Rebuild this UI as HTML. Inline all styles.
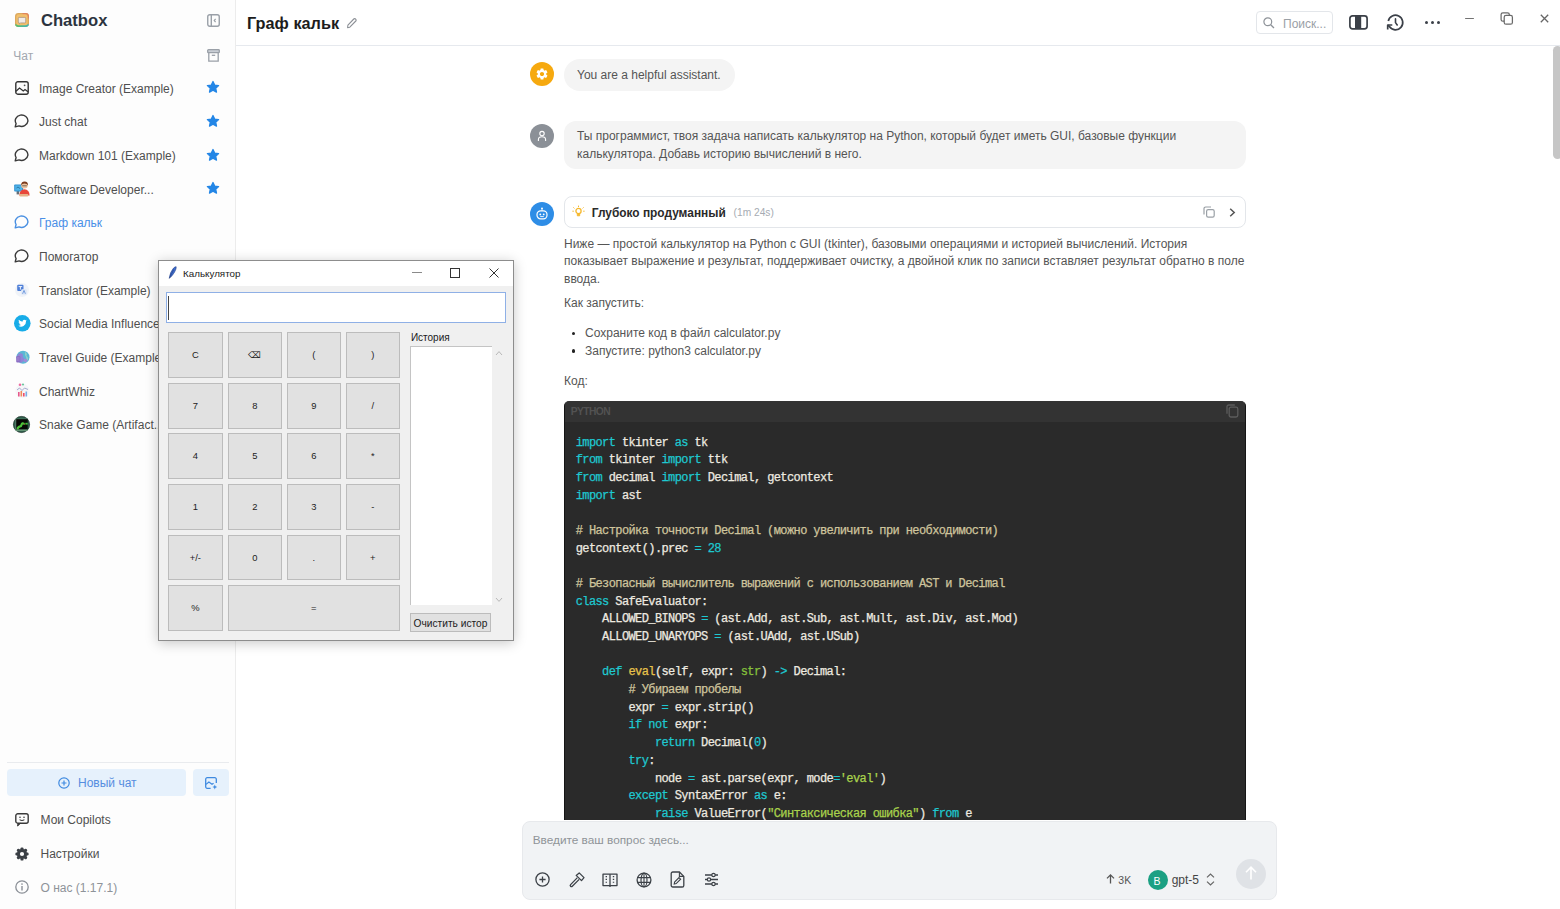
<!DOCTYPE html>
<html><head><meta charset="utf-8">
<style>
*{margin:0;padding:0;box-sizing:border-box}
html,body{width:1560px;height:909px;overflow:hidden;background:#fff;font-family:"Liberation Sans",sans-serif;color:#333}
.a{position:absolute;white-space:nowrap}
.ico{position:absolute;overflow:visible}
#sb{position:absolute;left:0;top:0;width:236px;height:909px;background:#fdfdfd;border-right:1px solid #ececec}
.code{font-family:"Liberation Mono",monospace;font-size:12px;letter-spacing:-0.6px;color:#eeeae0;white-space:pre;-webkit-text-stroke:0.25px currentColor}
.k{color:#1ec8d0}.c{color:#cfc59d}.f{color:#e8c34a}.s{color:#a9d34c}.b{color:#86c13c}
.btn{position:absolute;background:#e1e1e1;border:1px solid #bcbcbc;font-size:9.4px;color:#222;display:flex;align-items:center;justify-content:center;padding-bottom:1px;font-family:"Liberation Sans",sans-serif;white-space:nowrap}

</style></head><body>
<div id="sb"></div>
<svg class="ico" style="left:15px;top:13px" width="14" height="14" viewBox="0 0 14 14"><defs><clipPath id="lg"><rect x="0" y="0" width="14" height="14" rx="3.4"/></clipPath><linearGradient id="lgb" x1="0" x2="1"><stop offset="0" stop-color="#5cbf6a"/><stop offset="1" stop-color="#3fb3c0"/></linearGradient></defs><g clip-path="url(#lg)"><rect x="0" y="0" width="14" height="14" fill="#dba85e"/><rect x="7.5" y="0" width="6.5" height="5.5" fill="#e0845e"/><rect x="0" y="11.3" width="14" height="2.7" fill="url(#lgb)"/></g><rect x="1.3" y="1.3" width="11.4" height="11" rx="2.4" fill="#f2c06c"/><path d="M4.2 4.4 H9.8 A0.9 0.9 0 0 1 10.7 5.3 V9 A0.9 0.9 0 0 1 9.8 9.9 H5.6 L4.4 10.9 V9.9 A0.9 0.9 0 0 1 3.3 9 V5.3 A0.9 0.9 0 0 1 4.2 4.4Z" fill="#f1ebe6" stroke="#a08c7c" stroke-width="0.7"/></svg><div class="a" style="left:41px;top:11.45px;font-size:16.6px;line-height:20px;color:#2c3440;font-weight:bold;">Chatbox</div>
<svg class="ico" style="left:207px;top:14px" width="13" height="13" viewBox="0 0 13 13"><rect x="0.75" y="0.75" width="11.5" height="11.5" rx="2" fill="none" stroke="#9aa0a8" stroke-width="1.4"/><line x1="4.3" y1="1" x2="4.3" y2="12" stroke="#9aa0a8" stroke-width="1.4"/><path d="M8.6 4.8 L7.2 6.5 L8.6 8.2" fill="none" stroke="#9aa0a8" stroke-width="1.2"/></svg><div class="a" style="left:13.3px;top:48.74px;font-size:12px;line-height:14px;color:#a3a8b0;font-weight:normal;">Чат</div>
<svg class="ico" style="left:207px;top:49px" width="13" height="13" viewBox="0 0 13 13"><rect x="0.7" y="0.7" width="11.6" height="3" rx="0.8" fill="#c9ced5" stroke="#9aa0a8" stroke-width="1.3"/><path d="M1.8 3.8 V12.2 H11.2 V3.8" fill="none" stroke="#9aa0a8" stroke-width="1.3"/><line x1="4.8" y1="6.3" x2="8.2" y2="6.3" stroke="#9aa0a8" stroke-width="1.3"/></svg><div class="a" style="left:39px;top:81.74px;font-size:12px;line-height:14px;color:#4f4f4f;font-weight:normal;">Image Creator (Example)</div>
<svg class="ico" style="left:15px;top:80.60px" width="14" height="14" viewBox="0 0 14 14"><rect x="0.8" y="0.8" width="12.4" height="12.4" rx="2" fill="none" stroke="#333" stroke-width="1.4"/><path d="M1 10.2 L4.5 7 L8.3 10 L10 8.6 L13 10.8" fill="none" stroke="#333" stroke-width="1.3"/><circle cx="9.6" cy="4.3" r="0.9" fill="#555"/></svg><svg class="ico" style="left:206px;top:80.20px" width="14" height="14" viewBox="0 0 24 24"><path d="M12 2.6l2.9 6.1 6.7.8-5 4.6 1.4 6.6L12 17.3l-6 3.4 1.4-6.6-5-4.6 6.7-.8z" fill="#2386e6" stroke="#2386e6" stroke-width="2.2" stroke-linejoin="round"/></svg><div class="a" style="left:39px;top:115.41px;font-size:12px;line-height:14px;color:#4f4f4f;font-weight:normal;">Just chat</div>
<div class="ico" style="left:14.3px;top:114.07px"><svg width="15" height="14" viewBox="0 0 15 14"><path d="M1.2 12.9 L2.1 9.5 A6.3 5.7 0 1 1 5.0 11.9 Z" fill="none" stroke="#3a3a3a" stroke-width="1.4" stroke-linejoin="round"/></svg></div><svg class="ico" style="left:206px;top:113.87px" width="14" height="14" viewBox="0 0 24 24"><path d="M12 2.6l2.9 6.1 6.7.8-5 4.6 1.4 6.6L12 17.3l-6 3.4 1.4-6.6-5-4.6 6.7-.8z" fill="#2386e6" stroke="#2386e6" stroke-width="2.2" stroke-linejoin="round"/></svg><div class="a" style="left:39px;top:149.08px;font-size:12px;line-height:14px;color:#4f4f4f;font-weight:normal;">Markdown 101 (Example)</div>
<div class="ico" style="left:14.3px;top:147.74px"><svg width="15" height="14" viewBox="0 0 15 14"><path d="M1.2 12.9 L2.1 9.5 A6.3 5.7 0 1 1 5.0 11.9 Z" fill="none" stroke="#3a3a3a" stroke-width="1.4" stroke-linejoin="round"/></svg></div><svg class="ico" style="left:206px;top:147.54px" width="14" height="14" viewBox="0 0 24 24"><path d="M12 2.6l2.9 6.1 6.7.8-5 4.6 1.4 6.6L12 17.3l-6 3.4 1.4-6.6-5-4.6 6.7-.8z" fill="#2386e6" stroke="#2386e6" stroke-width="2.2" stroke-linejoin="round"/></svg><div class="a" style="left:39px;top:182.75px;font-size:12px;line-height:14px;color:#4f4f4f;font-weight:normal;">Software Developer...</div>
<svg class="ico" style="left:14px;top:180.61px" width="16" height="16" viewBox="0 0 16 16"><rect x="2.6" y="10" width="2.6" height="3.4" fill="#6a6f75"/><rect x="0.2" y="3.4" width="9" height="7.2" rx="0.8" fill="#2f8fd0"/><rect x="1.2" y="4.4" width="7" height="5.2" fill="#4fb3e8"/><path d="M2.5 7 L4 6 L6 7.5" fill="none" stroke="#1d5f8a" stroke-width="0.7"/><circle cx="10.5" cy="4.2" r="3.3" fill="#eec29c"/><path d="M7.2 4.6 Q7 0.4 10.6 0.4 Q14.2 0.4 13.9 4.6 Q13.2 2.4 10.5 2.4 Q7.9 2.4 7.2 4.6Z" fill="#7a3b1d"/><path d="M8.2 4.8 H12.8" stroke="#444" stroke-width="0.7"/><path d="M5.4 14.6 Q5.6 8.4 10.5 8.3 Q15.4 8.4 15.6 14.6Z" fill="#e8473a"/><rect x="5.4" y="13" width="9" height="2.4" rx="1" fill="#e6b287"/></svg><svg class="ico" style="left:206px;top:181.21px" width="14" height="14" viewBox="0 0 24 24"><path d="M12 2.6l2.9 6.1 6.7.8-5 4.6 1.4 6.6L12 17.3l-6 3.4 1.4-6.6-5-4.6 6.7-.8z" fill="#2386e6" stroke="#2386e6" stroke-width="2.2" stroke-linejoin="round"/></svg><div class="a" style="left:39px;top:216.42px;font-size:12px;line-height:14px;color:#4a8fe7;font-weight:normal;">Граф кальк</div>
<div class="ico" style="left:14.3px;top:215.08px"><svg width="15" height="14" viewBox="0 0 15 14"><path d="M1.2 12.9 L2.1 9.5 A6.3 5.7 0 1 1 5.0 11.9 Z" fill="none" stroke="#4a90e2" stroke-width="1.4" stroke-linejoin="round"/></svg></div><div class="a" style="left:39px;top:250.09px;font-size:12px;line-height:14px;color:#4f4f4f;font-weight:normal;">Помогатор</div>
<div class="ico" style="left:14.3px;top:248.75px"><svg width="15" height="14" viewBox="0 0 15 14"><path d="M1.2 12.9 L2.1 9.5 A6.3 5.7 0 1 1 5.0 11.9 Z" fill="none" stroke="#3a3a3a" stroke-width="1.4" stroke-linejoin="round"/></svg></div><div class="a" style="left:39px;top:283.76px;font-size:12px;line-height:14px;color:#4f4f4f;font-weight:normal;">Translator (Example)</div>
<svg class="ico" style="left:15px;top:282.62px" width="14" height="14" viewBox="0 0 14 14"><circle cx="7" cy="7" r="7" fill="#f0f3f8"/><rect x="2.2" y="1.8" width="6.3" height="6.3" rx="1" fill="#4e7fd8"/><path d="M3.6 3.6 H7.2 M5.4 3.6 V6.6" stroke="#fff" stroke-width="0.9"/><rect x="6.2" y="6.2" width="5.6" height="5.6" rx="1" fill="#dfe8f7"/><path d="M7.6 10.8 L9 7.4 L10.4 10.8" fill="none" stroke="#5b8ad8" stroke-width="0.8"/></svg><div class="a" style="left:39px;top:317.43px;font-size:12px;line-height:14px;color:#4f4f4f;font-weight:normal;">Social Media Influencer (Example)</div>
<svg class="ico" style="left:13.5px;top:315.19px" width="16.6" height="16.6" viewBox="0 0 15 15"><circle cx="7.5" cy="7.5" r="7.5" fill="#17ace8"/><path d="M11.6 4.9c-.3.1-.6.2-.9.3.3-.2.6-.5.7-.9-.3.2-.7.3-1 .4a1.6 1.6 0 0 0-2.7 1.4A4.5 4.5 0 0 1 4.4 4.4a1.6 1.6 0 0 0 .5 2.1c-.3 0-.5-.1-.7-.2 0 .8.6 1.4 1.3 1.6-.2.1-.5.1-.7 0 .2.6.8 1.1 1.5 1.1a3.2 3.2 0 0 1-2.4.7 4.5 4.5 0 0 0 7-4v-.2c.3-.2.5-.5.7-.8z" fill="#fff"/></svg><div class="a" style="left:39px;top:351.10px;font-size:12px;line-height:14px;color:#4f4f4f;font-weight:normal;">Travel Guide (Example)</div>
<svg class="ico" style="left:14.5px;top:349.96px" width="15" height="15" viewBox="0 0 15 15"><circle cx="8" cy="7.2" r="6.5" fill="#5ab8d6"/><path d="M3 4 Q6 2.5 8 4.5 Q7 7 9.5 8.5 Q9 11.5 6.5 13 Q2.5 11 1.8 7.5Z" fill="#8f86d6"/><path d="M10 1.5 Q12.5 3.5 11.5 5.5 Q13.5 7 12.8 10.5 Q11 9 11 7 Q9.5 5 10 1.5Z" fill="#8fd0c8"/><circle cx="10.5" cy="10.5" r="1.8" fill="#a08ad8"/><rect x="1.2" y="6" width="4.2" height="6.4" rx="1" fill="#8c6fc4"/><path d="M2 8 H4.6 M2 10 H4.6" stroke="#b79be0" stroke-width="0.6"/></svg><div class="a" style="left:39px;top:384.77px;font-size:12px;line-height:14px;color:#4f4f4f;font-weight:normal;">ChartWhiz</div>
<svg class="ico" style="left:14.5px;top:382.63px" width="15" height="16" viewBox="0 0 15 16"><circle cx="7.5" cy="8" r="7.2" fill="#f6f6f8"/><path d="M2 7 L4.5 5 L7 7.5 L9.5 5 L13 6.5" fill="none" stroke="#9aa0c8" stroke-width="0.9"/><rect x="3" y="9" width="1.6" height="4.5" fill="#e8588a"/><rect x="5.5" y="8" width="1.6" height="5.5" fill="#f08b5a"/><rect x="8" y="10" width="1.6" height="3.5" fill="#ef4d6d"/><rect x="10.5" y="8.5" width="1.6" height="5" fill="#7aaee6"/><circle cx="5" cy="1.8" r="1.3" fill="#f06aa0"/><circle cx="8" cy="1.5" r="1.1" fill="#6cc6a0"/></svg><div class="a" style="left:39px;top:418.44px;font-size:12px;line-height:14px;color:#4f4f4f;font-weight:normal;">Snake Game (Artifact...</div>
<svg class="ico" style="left:13.3px;top:416.30px" width="17" height="17" viewBox="0 0 17 17"><circle cx="8.5" cy="8.5" r="8.3" fill="#2f5e4c"/><circle cx="8.5" cy="8.5" r="8.1" fill="none" stroke="#22302a" stroke-width="0.6"/><rect x="3" y="3" width="11.7" height="10.6" fill="#060906"/><rect x="3" y="2.4" width="11.7" height="0.8" fill="#4a7a62"/><rect x="2.6" y="13.5" width="12" height="1.4" fill="#6a9a7a"/><rect x="2.4" y="3" width="0.8" height="10.6" fill="#6a8a7a"/><path d="M4.6 12.4 Q5.6 10.6 7 10.4 Q8.4 10 8.7 8.2 Q9.4 6.8 10.8 7.6" stroke="#4cc23a" stroke-width="2.2" fill="none" stroke-linecap="round"/><rect x="12.3" y="6.8" width="2.4" height="1.8" fill="#3fc23a"/><circle cx="11.3" cy="8.2" r="0.7" fill="#8a5a2a"/></svg><div class="a" style="left:7px;top:761.5px;width:222px;height:1px;background:#e9ebee"></div><div class="a" style="left:7px;top:769px;width:179px;height:27px;background:#e6f1fc;border-radius:4px"></div><svg class="ico" style="left:58px;top:776.5px" width="12" height="12" viewBox="0 0 12 12"><circle cx="6" cy="6" r="5.2" fill="none" stroke="#3f8ae0" stroke-width="1.2"/><path d="M6 3.5v5M3.5 6h5" stroke="#3f8ae0" stroke-width="1.2"/></svg><div class="a" style="left:78px;top:776.14px;font-size:12px;line-height:14px;color:#558de0;font-weight:normal;">Новый чат</div>
<div class="a" style="left:193px;top:769px;width:36px;height:27px;background:#e6f1fc;border-radius:4px"></div><svg class="ico" style="left:205px;top:776.5px" width="12.5" height="12.5" viewBox="0 0 12.5 12.5"><path d="M5.6 11.3 H2.2 A1.5 1.5 0 0 1 0.7 9.8 V2.2 A1.5 1.5 0 0 1 2.2 0.7 H9.8 A1.5 1.5 0 0 1 11.3 2.2 V6" fill="none" stroke="#3f8ae0" stroke-width="1.3"/><path d="M1 7.4 L3.9 5 L7 7.3 L8.6 6.2" fill="none" stroke="#3f8ae0" stroke-width="1.2"/><path d="M9.8 7.6 L10.5 9.3 L12.2 10 L10.5 10.7 L9.8 12.4 L9.1 10.7 L7.4 10 L9.1 9.3Z" fill="#3f8ae0"/></svg><svg class="ico" style="left:15px;top:813px" width="14" height="14" viewBox="0 0 14 14"><rect x="0.8" y="0.8" width="12.4" height="9.4" rx="2" fill="none" stroke="#3a3a3a" stroke-width="1.4"/><path d="M3 10.2 L2.6 13 L5.6 10.2" fill="#3a3a3a" stroke="#3a3a3a" stroke-width="1"/><circle cx="5" cy="4.2" r="0.8" fill="#3a3a3a"/><circle cx="9" cy="4.2" r="0.8" fill="#3a3a3a"/><path d="M4.6 6.6 Q7 8.4 9.4 6.6" fill="none" stroke="#3a3a3a" stroke-width="1.1"/></svg><div class="a" style="left:40.5px;top:812.84px;font-size:12px;line-height:14px;color:#4f4f4f;font-weight:normal;">Мои Copilots</div>
<svg class="ico" style="left:15px;top:846.5px" width="14" height="14" viewBox="0 0 14 14"><g fill="#3a3f45"><circle cx="7" cy="7" r="5.1"/><rect x="5.5" y="0.4" width="3" height="13.2" rx="1.2"/><rect x="5.5" y="0.4" width="3" height="13.2" rx="1.2" transform="rotate(45 7 7)"/><rect x="5.5" y="0.4" width="3" height="13.2" rx="1.2" transform="rotate(90 7 7)"/><rect x="5.5" y="0.4" width="3" height="13.2" rx="1.2" transform="rotate(135 7 7)"/></g><circle cx="7" cy="7" r="2.1" fill="#fdfdfd"/></svg><div class="a" style="left:40.5px;top:846.64px;font-size:12px;line-height:14px;color:#4f4f4f;font-weight:normal;">Настройки</div>
<svg class="ico" style="left:15px;top:880px" width="14" height="14" viewBox="0 0 14 14"><circle cx="7" cy="7" r="6.2" fill="none" stroke="#8a8f96" stroke-width="1.3"/><rect x="6.3" y="6" width="1.4" height="4.5" fill="#8a8f96"/><circle cx="7" cy="4" r="0.85" fill="#8a8f96"/></svg><div class="a" style="left:40.5px;top:880.64px;font-size:12px;line-height:14px;color:#8e9399;font-weight:normal;">О нас (1.17.1)</div>

<div class="a" style="left:236px;top:44.5px;width:1324px;height:1px;background:#e6e9ee"></div><div class="a" style="left:247px;top:12.75px;font-size:16.3px;line-height:20px;color:#1c1c1c;font-weight:bold;">Граф кальк</div>
<svg class="ico" style="left:346px;top:17px" width="11" height="12" viewBox="0 0 11 12"><path d="M1.6 10.6 L1.9 8.2 L7.8 2.0 A1.2 1.2 0 0 1 9.5 2.0 L9.8 2.3 A1.2 1.2 0 0 1 9.8 4.0 L3.8 10.2 Z" fill="none" stroke="#8c9096" stroke-width="1.1" stroke-linejoin="round"/></svg><div class="a" style="left:1256px;top:11px;width:77px;height:23px;border:1px solid #e3e6ea;border-radius:4px;background:#fff"></div><svg class="ico" style="left:1263px;top:17px" width="12" height="12" viewBox="0 0 12 12"><circle cx="4.8" cy="4.8" r="3.9" fill="none" stroke="#8e9399" stroke-width="1.2"/><path d="M7.7 7.7 L11 11" stroke="#8e9399" stroke-width="1.3"/></svg><div class="a" style="left:1283px;top:17.14px;font-size:12px;line-height:14px;color:#9aa0a6;font-weight:normal;">Поиск...</div>
<svg class="ico" style="left:1349px;top:15px" width="19" height="15" viewBox="0 0 19 15"><rect x="0.9" y="0.9" width="17.2" height="13" rx="2.6" fill="none" stroke="#3b4048" stroke-width="1.7"/><rect x="6" y="0.9" width="6.2" height="13" fill="#3b4048"/></svg><svg class="ico" style="left:1386px;top:14px" width="19" height="18" viewBox="0 0 19 18"><path d="M2.3 7.0 A7.3 7.3 0 1 1 3.4 12.6 L1.9 11.2" fill="none" stroke="#3b4048" stroke-width="1.7"/><path d="M1.7 15.4 V11.0 H6.3" fill="none" stroke="#3b4048" stroke-width="1.7" stroke-linejoin="round"/><path d="M9.5 4.9 V8.6 L11.2 11" fill="none" stroke="#3b4048" stroke-width="1.6" stroke-linecap="round"/></svg><div class="a" style="left:1424.9px;top:21px;width:3.2px;height:3.2px;border-radius:50%;background:#3b4048"></div><div class="a" style="left:1430.9px;top:21px;width:3.2px;height:3.2px;border-radius:50%;background:#3b4048"></div><div class="a" style="left:1436.9px;top:21px;width:3.2px;height:3.2px;border-radius:50%;background:#3b4048"></div><div class="a" style="left:1465px;top:17.8px;width:9.2px;height:1.5px;border-radius:1px;background:#737373"></div><svg class="ico" style="left:1500px;top:12px" width="14" height="13" viewBox="0 0 14 13"><rect x="1.1" y="0.8" width="8.2" height="8.4" rx="1.8" fill="none" stroke="#6a6a6a" stroke-width="1.25"/><rect x="4.2" y="3.4" width="8.2" height="8.8" rx="1.8" fill="#fff" stroke="#6a6a6a" stroke-width="1.25"/></svg><svg class="ico" style="left:1539.5px;top:14px" width="9" height="9" viewBox="0 0 9 9"><path d="M0.8 0.8 L8.2 8.2 M8.2 0.8 L0.8 8.2" stroke="#666" stroke-width="1.3"/></svg><div class="a" style="left:1552.5px;top:46px;width:9px;height:113px;border-radius:4.5px;background:#c6c6c6"></div>
<div class="a" style="left:530px;top:62px;width:24px;height:24px;border-radius:50%;background:#f6a90f"></div><svg class="ico" style="left:535px;top:67px" width="14" height="14" viewBox="0 0 24 24"><path fill="#fff" d="M19.14 12.94c.04-.3.06-.61.06-.94 0-.32-.02-.64-.07-.94l2.03-1.58a.49.49 0 0 0 .12-.61l-1.92-3.32a.49.49 0 0 0-.59-.22l-2.39.96c-.5-.38-1.03-.7-1.62-.94l-.36-2.54a.484.484 0 0 0-.48-.41h-3.84c-.24 0-.43.17-.47.41l-.36 2.54c-.59.24-1.130.57-1.62.94l-2.39-.96a.49.49 0 0 0-.59.22L2.74 8.87c-.12.21-.08.47.12.61l2.03 1.58c-.05.3-.09.63-.09.94s.02.64.07.94l-2.03 1.58a.49.49 0 0 0-.12.61l1.92 3.32c.12.22.37.29.59.22l2.39-.96c.5.38 1.03.7 1.62.94l.36 2.54c.05.24.24.41.48.41h3.84c.24 0 .44-.17.47-.41l.36-2.54c.59-.24 1.13-.56 1.62-.94l2.39.96c.22.08.47 0 .59-.22l1.92-3.32c.12-.22.07-.47-.12-.61l-2.01-1.58zM12 15.6c-1.98 0-3.6-1.62-3.6-3.6s1.62-3.6 3.6-3.6 3.6 1.62 3.6 3.6-1.62 3.6-3.6 3.6z"/></svg><div class="a" style="left:564px;top:59px;width:171px;height:32px;border-radius:16px;background:#f4f4f4"></div><div class="a" style="left:577px;top:68.04px;font-size:12px;line-height:14px;color:#555;font-weight:normal;">You are a helpful assistant.</div>
<div class="a" style="left:530px;top:123.5px;width:24px;height:24px;border-radius:50%;background:#8b9097"></div><svg class="ico" style="left:536px;top:129.5px" width="12" height="12" viewBox="0 0 12 12"><circle cx="6" cy="3.6" r="2.2" fill="none" stroke="#fff" stroke-width="1.1"/><path d="M2.4 11 V9.6 A3.2 2.6 0 0 1 9.6 9.6 V11" fill="none" stroke="#fff" stroke-width="1.1"/></svg><div class="a" style="left:564px;top:121px;width:682px;height:48px;border-radius:12px;background:#f4f4f4"></div><div class="a" style="left:577px;top:129.44px;font-size:12px;line-height:14px;color:#555;font-weight:normal;">Ты программист, твоя задача написать калькулятор на Python, который будет иметь GUI, базовые функции</div>
<div class="a" style="left:577px;top:147.04px;font-size:12px;line-height:14px;color:#555;font-weight:normal;">калькулятора. Добавь историю вычислений в него.</div>
<div class="a" style="left:530px;top:202px;width:24px;height:24px;border-radius:50%;background:#2e8de6"></div><svg class="ico" style="left:535px;top:207px" width="14" height="14" viewBox="0 0 14 14"><circle cx="7" cy="1.6" r="1" fill="#fff"/><path d="M7 2.4 V3.6" stroke="#fff" stroke-width="1"/><rect x="2" y="3.8" width="10" height="8" rx="3.6" fill="none" stroke="#fff" stroke-width="1.2"/><circle cx="5.3" cy="7.4" r="0.9" fill="#fff"/><circle cx="8.7" cy="7.4" r="0.9" fill="#fff"/><path d="M5.2 9.6 H8.8" stroke="#fff" stroke-width="0.9"/></svg><div class="a" style="left:564px;top:196px;width:682px;height:31.5px;border-radius:8px;border:1px solid #e3e6ea;background:#fff"></div><svg class="ico" style="left:571.5px;top:205px" width="13" height="13" viewBox="0 0 13 13"><circle cx="6.5" cy="6" r="2.6" fill="none" stroke="#f5b82e" stroke-width="1.3"/><path d="M5.3 8.6 V10.8 H7.7 V8.6" fill="#f5b82e" stroke="#f5b82e" stroke-width="0.9"/><path d="M6.5 0.6 V2 M1.4 2.4 L2.4 3.4 M11.6 2.4 L10.6 3.4 M0.4 6.2 H1.8 M11.2 6.2 H12.6" stroke="#f5b82e" stroke-width="1"/></svg><div class="a" style="left:591.8px;top:206.48px;font-size:11.9px;line-height:14px;color:#2a2a2a;font-weight:bold;">Глубоко продуманный</div>
<div class="a" style="left:733.6px;top:206.97px;font-size:10.2px;line-height:12px;color:#a6abb2;font-weight:normal;">(1m 24s)</div>
<svg class="ico" style="left:1203px;top:205.5px" width="12" height="12" viewBox="0 0 12 12"><rect x="3.6" y="3.6" width="7.6" height="7.6" rx="1.6" fill="none" stroke="#9aa0a6" stroke-width="1.2"/><path d="M1 8.4 V2.6 A1.6 1.6 0 0 1 2.6 1 H8" fill="none" stroke="#9aa0a6" stroke-width="1.2"/></svg><svg class="ico" style="left:1228.5px;top:207.5px" width="7" height="9" viewBox="0 0 7 9"><path d="M1.2 0.8 L5.2 4.5 L1.2 8.2" fill="none" stroke="#555" stroke-width="1.5"/></svg><div class="a" style="left:564px;top:236.84px;font-size:12px;line-height:14px;color:#555;font-weight:normal;">Ниже — простой калькулятор на Python с GUI (tkinter), базовыми операциями и историей вычислений. История</div>
<div class="a" style="left:564px;top:254.44px;font-size:12px;line-height:14px;color:#555;font-weight:normal;">показывает выражение и результат, поддерживает очистку, а двойной клик по записи вставляет результат обратно в поле</div>
<div class="a" style="left:564px;top:271.94px;font-size:12px;line-height:14px;color:#555;font-weight:normal;">ввода.</div>
<div class="a" style="left:564px;top:296.44px;font-size:12px;line-height:14px;color:#555;font-weight:normal;">Как запустить:</div>
<div class="a" style="left:564px;top:373.64px;font-size:12px;line-height:14px;color:#555;font-weight:normal;">Код:</div>
<div class="a" style="left:572px;top:331.60px;width:3.4px;height:3.4px;border-radius:50%;background:#222"></div><div class="a" style="left:585px;top:326.04px;font-size:12px;line-height:14px;color:#555;font-weight:normal;">Сохраните код в файл calculator.py</div>
<div class="a" style="left:572px;top:349.30px;width:3.4px;height:3.4px;border-radius:50%;background:#222"></div><div class="a" style="left:585px;top:343.74px;font-size:12px;line-height:14px;color:#555;font-weight:normal;">Запустите: python3 calculator.py</div>

<div class="a" style="left:563.5px;top:400.5px;width:682.5px;height:419.5px;overflow:hidden"><div class="a" style="left:0;top:0;width:682.5px;height:600px;background:#2a2a2a;border:1px solid #151515;border-top-color:#333;border-radius:5px;overflow:hidden"><div class="a" style="left:0;top:0;width:100%;height:20px;background:#333"></div></div><div class="a" style="left:7.3px;top:5.83px;font-size:10.3px;line-height:12px;color:#525252;font-weight:bold;letter-spacing:-0.6px;">PYTHON</div>
<svg class="ico" style="left:662.5px;top:3.2px" width="13" height="14" viewBox="0 0 13 14"><rect x="3.2" y="3.2" width="8.6" height="9.8" rx="1.8" fill="none" stroke="#5c5c5c" stroke-width="1.3"/><path d="M1 9.8 V2.8 A1.8 1.8 0 0 1 2.8 1 H8.8" fill="none" stroke="#5c5c5c" stroke-width="1.3"/></svg><div class="a code" style="left:12.2px;top:35.10px;line-height:14px"><span class="k">import</span> tkinter <span class="k">as</span> tk</div><div class="a code" style="left:12.2px;top:52.78px;line-height:14px"><span class="k">from</span> tkinter <span class="k">import</span> ttk</div><div class="a code" style="left:12.2px;top:70.46px;line-height:14px"><span class="k">from</span> decimal <span class="k">import</span> Decimal, getcontext</div><div class="a code" style="left:12.2px;top:88.14px;line-height:14px"><span class="k">import</span> ast</div><div class="a code" style="left:12.2px;top:105.82px;line-height:14px"></div><div class="a code" style="left:12.2px;top:123.50px;line-height:14px"><span class="c"># Настройка точности Decimal (можно увеличить при необходимости)</span></div><div class="a code" style="left:12.2px;top:141.18px;line-height:14px">getcontext().prec <span class="k">=</span> <span class="k">28</span></div><div class="a code" style="left:12.2px;top:158.86px;line-height:14px"></div><div class="a code" style="left:12.2px;top:176.54px;line-height:14px"><span class="c"># Безопасный вычислитель выражений с использованием AST и Decimal</span></div><div class="a code" style="left:12.2px;top:194.22px;line-height:14px"><span class="k">class</span> SafeEvaluator:</div><div class="a code" style="left:12.2px;top:211.90px;line-height:14px">    ALLOWED_BINOPS <span class="k">=</span> (ast.Add, ast.Sub, ast.Mult, ast.Div, ast.Mod)</div><div class="a code" style="left:12.2px;top:229.58px;line-height:14px">    ALLOWED_UNARYOPS <span class="k">=</span> (ast.UAdd, ast.USub)</div><div class="a code" style="left:12.2px;top:247.26px;line-height:14px"></div><div class="a code" style="left:12.2px;top:264.94px;line-height:14px">    <span class="k">def</span> <span class="f">eval</span>(self, expr: <span class="b">str</span>) <span class="k">-&gt;</span> Decimal:</div><div class="a code" style="left:12.2px;top:282.62px;line-height:14px">        <span class="c"># Убираем пробелы</span></div><div class="a code" style="left:12.2px;top:300.30px;line-height:14px">        expr <span class="k">=</span> expr.strip()</div><div class="a code" style="left:12.2px;top:317.98px;line-height:14px">        <span class="k">if</span> <span class="k">not</span> expr:</div><div class="a code" style="left:12.2px;top:335.66px;line-height:14px">            <span class="k">return</span> Decimal(<span class="k">0</span>)</div><div class="a code" style="left:12.2px;top:353.34px;line-height:14px">        <span class="k">try</span>:</div><div class="a code" style="left:12.2px;top:371.02px;line-height:14px">            node <span class="k">=</span> ast.parse(expr, mode<span class="k">=</span><span class="s">&#x27;eval&#x27;</span>)</div><div class="a code" style="left:12.2px;top:388.70px;line-height:14px">        <span class="k">except</span> SyntaxError <span class="k">as</span> e:</div><div class="a code" style="left:12.2px;top:406.38px;line-height:14px">            <span class="k">raise</span> ValueError(<span class="s">&quot;Синтаксическая ошибка&quot;</span>) <span class="k">from</span> e</div><div class="a code" style="left:12.2px;top:424.06px;line-height:14px">            <span class="k">raise</span> ValueError(</div></div>
<div class="a" style="left:521.5px;top:820.5px;width:755.5px;height:79.5px;border-radius:8px;background:#f1f3f5;border:1px solid #e7e9ec"></div><div class="a" style="left:532.7px;top:833.21px;font-size:11.8px;line-height:14px;color:#8f9398;font-weight:normal;">Введите ваш вопрос здесь...</div>
<svg class="ico" style="left:535px;top:872px" width="15" height="15" viewBox="0 0 15 15"><circle cx="7.5" cy="7.5" r="6.6" fill="none" stroke="#3d4248" stroke-width="1.3"/><path d="M7.5 4.4v6.2M4.4 7.5h6.2" stroke="#3d4248" stroke-width="1.3"/></svg><svg class="ico" style="left:568.5px;top:871.5px" width="16" height="16" viewBox="0 0 16 16"><path d="M7.2 3.4 L10.2 0.9 L15 5.6 L12.5 8.6 Z" fill="none" stroke="#3d4248" stroke-width="1.3" stroke-linejoin="round"/><path d="M8.4 5.6 L1.6 12.6 A1.2 1.2 0 0 0 3.3 14.3 L10.2 7.4" fill="none" stroke="#3d4248" stroke-width="1.3" stroke-linejoin="round"/></svg><svg class="ico" style="left:602px;top:871.5px" width="16" height="16" viewBox="0 0 16 16"><path d="M8 2.2 H1 V13.6 H8 V15 M8 2.2 H15 V13.6 H8" fill="none" stroke="#3d4248" stroke-width="1.3" stroke-linejoin="round"/><path d="M8 2.2 V14" stroke="#3d4248" stroke-width="1.3"/><path d="M3.6 4.6h1.4M3.6 7.4h1.4M3.6 10.2h1.4M10.8 4.6h1.4M10.8 7.4h1.4M10.8 10.2h1.4" stroke="#3d4248" stroke-width="1.1"/></svg><svg class="ico" style="left:635.5px;top:871.5px" width="16" height="16" viewBox="0 0 16 16"><circle cx="8" cy="8" r="6.9" fill="none" stroke="#3d4248" stroke-width="1.3"/><ellipse cx="8" cy="8" rx="3" ry="6.9" fill="none" stroke="#3d4248" stroke-width="1.2"/><path d="M1.4 5.6h13.2M1.4 10.4h13.2M8 1.1v13.8" stroke="#3d4248" stroke-width="1.1"/></svg><svg class="ico" style="left:669.5px;top:871px" width="15" height="17" viewBox="0 0 15 17"><path d="M1.2 2.6 A1.6 1.6 0 0 1 2.8 1 H9.4 L13.8 5.4 V14.4 A1.6 1.6 0 0 1 12.2 16 H2.8 A1.6 1.6 0 0 1 1.2 14.4 Z" fill="none" stroke="#3d4248" stroke-width="1.3"/><path d="M9.4 1 V5.4 H13.8" fill="none" stroke="#3d4248" stroke-width="1.1"/><path d="M4.2 13 L4.6 11 L9 6.6 L10.6 8.2 L6.2 12.6 Z" fill="none" stroke="#3d4248" stroke-width="1.1"/></svg><svg class="ico" style="left:703.5px;top:872px" width="15" height="15" viewBox="0 0 15 15"><path d="M1 3h13M1 7.5h13M1 12h13" stroke="#3d4248" stroke-width="1.3"/><circle cx="9.5" cy="3" r="1.7" fill="#f1f3f5" stroke="#3d4248" stroke-width="1.2"/><circle cx="5" cy="7.5" r="1.7" fill="#f1f3f5" stroke="#3d4248" stroke-width="1.2"/><circle cx="9.5" cy="12" r="1.7" fill="#f1f3f5" stroke="#3d4248" stroke-width="1.2"/></svg><svg class="ico" style="left:1106px;top:874px" width="9" height="10" viewBox="0 0 9 10"><path d="M4.5 9.6 V1 M1 4.4 L4.5 0.9 L8 4.4" fill="none" stroke="#555" stroke-width="1.3"/></svg><div class="a" style="left:1118.3px;top:874.16px;font-size:10.5px;line-height:12px;color:#555;font-weight:normal;">3K</div>
<div class="a" style="left:1147.5px;top:869.5px;width:20px;height:20px;border-radius:50%;background:#1ba083"></div><div class="a" style="left:1153.6px;top:874.96px;font-size:10.5px;line-height:12px;color:#fff;font-weight:normal;">B</div>
<div class="a" style="left:1171.7px;top:873.14px;font-size:12px;line-height:14px;color:#444;font-weight:normal;">gpt-5</div>
<svg class="ico" style="left:1206px;top:872.5px" width="9" height="13" viewBox="0 0 9 13"><path d="M1 4.4 L4.5 1 L8 4.4 M1 8.6 L4.5 12 L8 8.6" fill="none" stroke="#666" stroke-width="1.2"/></svg><div class="a" style="left:1236.3px;top:859.2px;width:30px;height:30px;border-radius:50%;background:#dfe2e6"></div><svg class="ico" style="left:1245.3px;top:866px" width="12" height="14" viewBox="0 0 12 14"><path d="M6 13.5 V1.2 M1 6.2 L6 1.2 L11 6.2" fill="none" stroke="#fff" stroke-width="1.6"/></svg>
<div class="a" style="left:158px;top:260px;width:356px;height:381px;box-shadow:0 2px 12px rgba(0,0,0,0.22);background:#f0f0f0;border:1px solid #8d8d8d"></div><div class="a" style="left:159px;top:261px;width:354px;height:25px;background:#fff"></div><svg class="ico" style="left:167.5px;top:265.5px" width="9" height="13" viewBox="0 0 9 13"><path d="M1.2 12.4 Q2 6 5.6 2 Q7.4 0.4 8.2 0.8 Q8.6 2.4 6.6 6 Q4.4 10 1.6 12" fill="#3f6fd0" stroke="#253f88" stroke-width="0.6"/><path d="M1.4 12.2 L5.8 3.4" stroke="#1d2f66" stroke-width="0.5"/></svg><div class="a" style="left:183.1px;top:267.80px;font-size:9.8px;line-height:12px;color:#1a1a1a;font-weight:normal;">Калькулятор</div>
<div class="a" style="left:412px;top:272.3px;width:9.5px;height:1px;background:#8a8a8a"></div><div class="a" style="left:450px;top:268px;width:9.5px;height:9.5px;border:1px solid #333"></div><svg class="ico" style="left:488.5px;top:268px" width="10" height="10" viewBox="0 0 10 10"><path d="M0.5 0.5 L9.5 9.5 M9.5 0.5 L0.5 9.5" stroke="#333" stroke-width="1"/></svg><div class="a" style="left:165.5px;top:292.3px;width:340.5px;height:30.5px;background:#fff;border:1px solid #8fb0e6"></div><div class="a" style="left:168px;top:295.5px;width:1px;height:24px;background:#444"></div><div class="btn" style="left:168px;top:332.1px;width:54.6px;height:45.5px">C</div><div class="btn" style="left:227.8px;top:332.1px;width:54.1px;height:45.5px">⌫</div><div class="btn" style="left:286.9px;top:332.1px;width:54.0px;height:45.5px">(</div><div class="btn" style="left:345.9px;top:332.1px;width:53.9px;height:45.5px">)</div><div class="btn" style="left:168px;top:383.0px;width:54.6px;height:45.5px">7</div><div class="btn" style="left:227.8px;top:383.0px;width:54.1px;height:45.5px">8</div><div class="btn" style="left:286.9px;top:383.0px;width:54.0px;height:45.5px">9</div><div class="btn" style="left:345.9px;top:383.0px;width:53.9px;height:45.5px">/</div><div class="btn" style="left:168px;top:433.4px;width:54.6px;height:45.5px">4</div><div class="btn" style="left:227.8px;top:433.4px;width:54.1px;height:45.5px">5</div><div class="btn" style="left:286.9px;top:433.4px;width:54.0px;height:45.5px">6</div><div class="btn" style="left:345.9px;top:433.4px;width:53.9px;height:45.5px">*</div><div class="btn" style="left:168px;top:484.4px;width:54.6px;height:45.5px">1</div><div class="btn" style="left:227.8px;top:484.4px;width:54.1px;height:45.5px">2</div><div class="btn" style="left:286.9px;top:484.4px;width:54.0px;height:45.5px">3</div><div class="btn" style="left:345.9px;top:484.4px;width:53.9px;height:45.5px">-</div><div class="btn" style="left:168px;top:534.9px;width:54.6px;height:45.5px">+/-</div><div class="btn" style="left:227.8px;top:534.9px;width:54.1px;height:45.5px">0</div><div class="btn" style="left:286.9px;top:534.9px;width:54.0px;height:45.5px">.</div><div class="btn" style="left:345.9px;top:534.9px;width:53.9px;height:45.5px">+</div><div class="btn" style="left:168px;top:585.2px;width:54.6px;height:45.5px">%</div><div class="btn" style="left:227.8px;top:585.2px;width:172.0px;height:45.5px">=</div><div class="a" style="left:410.9px;top:332.14px;font-size:10px;line-height:12px;color:#1a1a1a;font-weight:normal;">История</div>
<div class="a" style="left:409.7px;top:346.3px;width:82px;height:259px;background:#fff;border-left:1px solid #c4c4c4;border-top:1px solid #c4c4c4"></div><svg class="ico" style="left:494.5px;top:349.5px" width="8" height="6" viewBox="0 0 8 6"><path d="M1 5 L4 1.6 L7 5" fill="none" stroke="#b8b8b8" stroke-width="1"/></svg><svg class="ico" style="left:494.5px;top:597px" width="8" height="6" viewBox="0 0 8 6"><path d="M1 1 L4 4.4 L7 1" fill="none" stroke="#b8b8b8" stroke-width="1"/></svg><div class="btn" style="left:410.2px;top:613.1px;width:80.6px;height:18.5px;font-size:10.2px;color:#222;padding-bottom:0;padding-top:2.2px">Очистить истор</div>
</body></html>
